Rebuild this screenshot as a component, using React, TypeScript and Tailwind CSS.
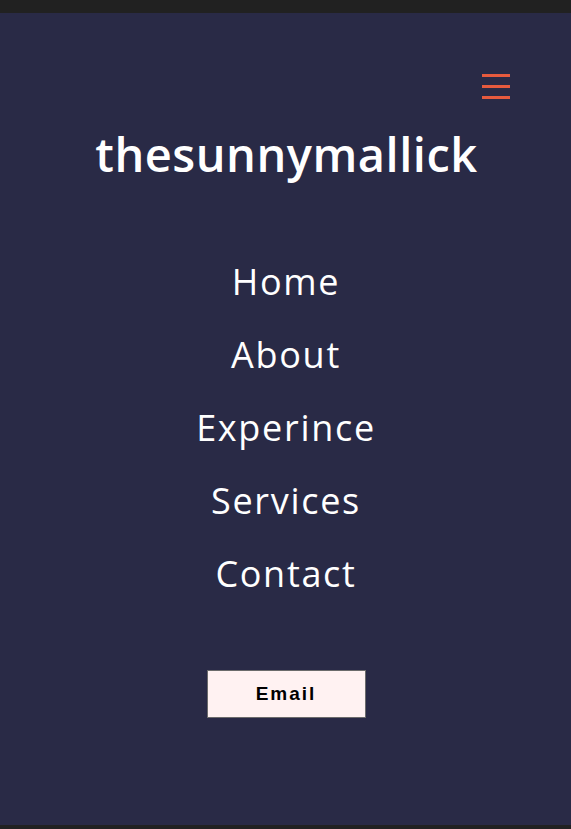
export default function App() {
  const links = ["Home", "About", "Experince", "Services", "Contact"];

  return (
    <div className="min-h-[829px] bg-[#212121] pt-[13px] pb-[4px]">
      <div
        className="bg-[#292a46] h-[812px] flex flex-col items-center text-white"
        style={{ fontFamily: '"Open Sans", sans-serif' }}
      >
        {/* Menu toggle */}
        <div className="w-full flex justify-end pr-[61px] pt-[61px]">
          <button className="flex flex-col gap-[8px] w-[28px]">
            <span className="block h-[3px] w-full bg-[#e65a3e]" />
            <span className="block h-[3px] w-full bg-[#e65a3e]" />
            <span className="block h-[3px] w-full bg-[#e65a3e]" />
          </button>
        </div>

        <h1 className="mt-[32px] ml-[2px] text-[47px] font-semibold leading-none tracking-[0.5px]">
          thesunnymallick
        </h1>

        <nav className="mt-[83px] ml-[1px] flex flex-col items-center gap-[31px]">
          {links.map((l) => (
            <a key={l} href="#" className="text-[36px] leading-[42px] tracking-[1.7px]">
              {l}
            </a>
          ))}
        </nav>

        <button
          className="mt-[75px] ml-[1px] w-[159px] h-[48px] bg-[#fff2f2] border border-[#6b6b6b] text-black text-[19px] font-bold tracking-[2px]"
          style={{ fontFamily: '"Liberation Sans", Arial, sans-serif' }}
        >
          Email
        </button>
      </div>
    </div>
  );
}
